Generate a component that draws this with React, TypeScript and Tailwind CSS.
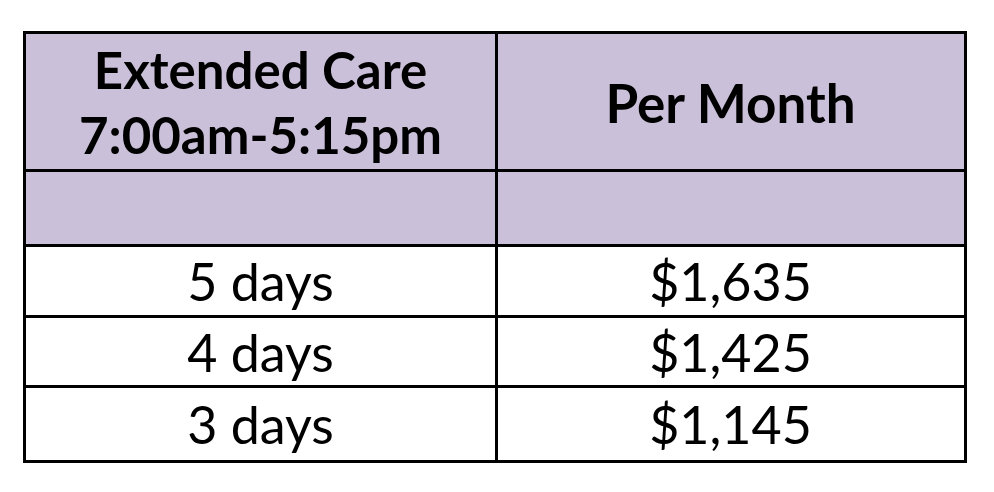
export default function App() {
  const rows = [
    { days: "5 days", price: "$1,635", h: "h-[68px]" },
    { days: "4 days", price: "$1,425", h: "h-[67px]" },
    { days: "3 days", price: "$1,145", h: "h-[72px]" },
  ];

  return (
    <div className="w-[994px] h-[492px] bg-white pt-[31px] pl-[23px] font-['Lato',sans-serif] text-black">
      <div className="w-[944px] border-[3px] border-black">
        <div className="grid grid-cols-[472px_465px] h-[138px] bg-[#cbc0d9] border-b-[3px] border-black">
          <div className="border-r-[3px] border-black flex flex-col items-center justify-center font-bold text-[51px] leading-[65px]">
            <span>Extended Care</span>
            <span>7:00am-5:15pm</span>
          </div>
          <div className="flex items-center justify-center font-bold text-[53px] leading-none pt-[2px]">Per Month</div>
        </div>
        <div className="grid grid-cols-[472px_465px] h-[75px] bg-[#cbc0d9] border-b-[3px] border-black">
          <div className="border-r-[3px] border-black"></div>
          <div></div>
        </div>
        {rows.map((r, i) => (
          <div
            key={r.days}
            className={`grid grid-cols-[472px_465px] ${r.h} ${i < rows.length - 1 ? "border-b-[3px] border-black box-content" : ""}`}
          >
            <div className="border-r-[3px] border-black flex items-center justify-center text-[52px] leading-none">{r.days}</div>
            <div className="flex items-center justify-center text-[52px] leading-none">{r.price}</div>
          </div>
        ))}
      </div>
    </div>
  );
}
